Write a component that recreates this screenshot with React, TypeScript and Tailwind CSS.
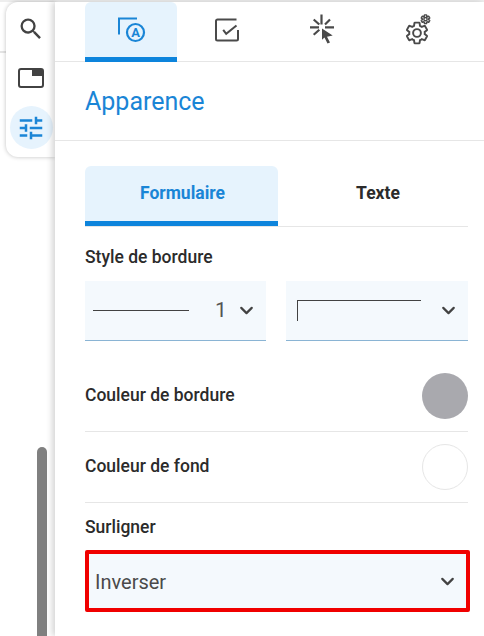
import { ChevronDown } from "lucide-react"

function SearchIcon() {
    return (
        <svg width="28" height="28" viewBox="0 0 24 24" fill="#424242">
            <path d="M15.5 14h-.79l-.28-.27A6.47 6.47 0 0 0 16 9.5 6.5 6.5 0 1 0 9.5 16c1.61 0 3.09-.59 4.23-1.57l.27.28v.79l5 4.99L20.49 19l-4.99-5zm-6 0C7.01 14 5 11.99 5 9.5S7.01 5 9.5 5 14 7.01 14 9.5 11.99 14 9.5 14z" />
        </svg>
    )
}

function PipIcon() {
    return (
        <svg width="28" height="28" viewBox="0 0 28 28" fill="none">
            <rect x="2" y="4" width="24" height="18" rx="2" stroke="#424242" strokeWidth="2" />
            <rect x="15" y="4" width="11" height="7" fill="#424242" />
        </svg>
    )
}

function TuneIcon() {
    return (
        <svg width="30" height="30" viewBox="0 0 24 24" fill="#1a85d6">
            <path d="M3 17v2h6v-2H3zM3 5v2h10V5H3zm10 16v-2h8v-2h-8v-2h-2v6h2zM7 9v2H3v2h4v2h2V9H7zm14 4v-2H11v2h10zm-6-4h2V7h4V5h-4V3h-2v6z" />
        </svg>
    )
}

function AppearanceIcon() {
    return (
        <svg width="30" height="30" viewBox="0 0 30 30" fill="none" stroke="#1a85d6" strokeWidth="2">
            <path d="M3 19.500V3.500h18" />
            <circle cx="19.500" cy="17.500" r="8.500" strokeWidth="2.200" />
            <text x="19.500" y="22" textAnchor="middle" fontSize="13" fontWeight="700" fill="#1a85d6" stroke="none" fontFamily="Roboto, sans-serif">A</text>
        </svg>
    )
}

function CheckBoxIcon() {
    return (
        <svg width="30" height="30" viewBox="0 0 30 30" fill="none" stroke="#4a4a4a" strokeWidth="2">
            <path d="M26 15v9a1.500 1.500 0 0 1-1.500 1.500h-19a1.500 1.500 0 0 1-1.500-1.500v-18a1.500 1.500 0 0 1 1.500-1.500h19" />
            <path d="M11.200 14.800l3 4 10.300-8.300" />
        </svg>
    )
}

function ClickIcon() {
    return (
        <svg width="32" height="32" viewBox="0 0 32 32" fill="none" stroke="#4a4a4a" strokeWidth="2.200">
            <path d="M15.500 .5v10M4 13.300h9M19 13.300h9M7.700 5.500l5.600 5M24 5.500l-5 5M7.700 20.800l5.600-5" />
            <path d="M16 14.500v11.300l2.500-2.300 3 6 2.500-1-3-5.700 5.700-1.300z" fill="#4a4a4a" stroke="none" />
        </svg>
    )
}

const GEAR =
    "M19.14 12.94c.04-.3.06-.61.06-.94 0-.32-.02-.64-.07-.94l2.030-1.580a.49.49 0 0 0 .12-.61l-1.920-3.320a.49.49 0 0 0-.59-.22l-2.390.96c-.5-.38-1.030-.7-1.620-.94l-.36-2.540a.484.484 0 0 0-.48-.41h-3.840c-.24 0-.43.170-.47.41l-.36 2.540c-.59.24-1.130.570-1.620.94l-2.390-.96a.49.49 0 0 0-.59.22L2.740 8.870c-.12.21-.08.47.12.61l2.030 1.580c-.05.3-.09.63-.09.94s.02.64.07.94l-2.030 1.580a.49.49 0 0 0-.12.61l1.920 3.320c.12.22.37.29.59.22l2.390-.96c.5.38 1.030.7 1.620.94l.36 2.540c.05.24.24.41.48.41h3.840c.24 0 .44-.17.47-.41l.36-2.540c.59-.24 1.130-.56 1.620-.94l2.390.96c.22.080.47 0 .59-.22l1.920-3.320c.12-.22.070-.47-.12-.61l-2.010-1.580zM12 15.600A3.610 3.610 0 0 1 8.400 12 3.610 3.610 0 0 1 12 8.400a3.610 3.610 0 0 1 3.600 3.600 3.610 3.610 0 0 1-3.600 3.600z"

function GearsIcon() {
    return (
        <svg width="32" height="32" viewBox="0 0 32 32" fill="none" stroke="#4a4a4a">
            <g transform="translate(2.040 6.040) scale(1.080)" strokeWidth="1.800">
                <path d={GEAR} />
            </g>
            <g transform="translate(18.100 -.2) scale(0.450)" strokeWidth="3.300">
                <path d={GEAR} />
            </g>
        </svg>
    )
}

function Chevron() {
    return <ChevronDown size={21} strokeWidth={2.500} className="shrink-0 text-[#424242]" />
}

function ColorRow({ label, swatch }: { label: string; swatch: string }) {
    return (
        <div className="flex h-[71px] items-center justify-between border-b border-[#e6e6e6]">
            <span className="pb-[1px] text-[17.500px] font-medium text-[#2b2b2b]">{label}</span>
            <div className={`h-[46px] w-[46px] rounded-full ${swatch}`} />
        </div>
    )
}

export default function App() {
    return (
        <div className="relative flex h-[636px] w-[484px] overflow-hidden bg-white font-['Roboto',sans-serif]">
            {/* Page behind the sidebar */}
            <div className="absolute inset-x-0 top-0 h-[2px] bg-[#eeeeee]" />
            <div className="absolute left-0 top-[51px] h-[2px] w-[8px] bg-[#e4e4e4]" />
            <div className="absolute bottom-0 left-[37px] top-[447px] w-[10px] rounded-t-md bg-[#808080]" />

            {/* Left rail */}
            <div className="relative w-[55px] shrink-0 pl-[6px] pt-[2px]">
                <div className="flex h-[155px] flex-col items-center rounded-l-xl bg-white pl-[1px] pt-[13px] shadow-[0_0_4px_rgba(0,0,0,0.25)]">
                    <SearchIcon />
                    <div className="mt-[22px]">
                        <PipIcon />
                    </div>
                    <div className="mt-[13px] flex h-[43px] w-[43px] items-center justify-center rounded-full bg-[#e6f3fd]">
                        <TuneIcon />
                    </div>
                </div>
            </div>

            {/* Panel */}
            <div className="relative mt-[2px] min-w-0 flex-1 bg-white shadow-[-3px_0_6px_rgba(0,0,0,0.16)]">
                <div className="flex h-[60px] gap-[3.500px] border-b border-[#e6e6e6] pl-[30px]">
                    <div className="flex h-[60px] w-[92px] items-center justify-center rounded-t-md border-b-[5px] border-[#0d84dc] bg-[#e6f3fd]">
                        <AppearanceIcon />
                    </div>
                    <div className="flex h-[60px] w-[92px] items-center justify-center pb-[5px]">
                        <CheckBoxIcon />
                    </div>
                    <div className="flex h-[60px] w-[92px] items-center justify-center pb-[5px]">
                        <ClickIcon />
                    </div>
                    <div className="flex h-[60px] w-[92px] items-center justify-center pb-[5px]">
                        <GearsIcon />
                    </div>
                </div>

                <div className="flex h-[79px] items-center border-b border-[#e6e6e6] pl-[30px] pt-[1px]">
                    <h2 className="text-[25px] text-[#1a85d6]">Apparence</h2>
                </div>

                <div className="pl-[30px] pr-[16px] pt-[25px]">
                    {/* Tabs */}
                    <div className="flex h-[61px] border-b border-[#e6e6e6]">
                        <div className="flex h-[60px] w-[193px] items-center justify-center rounded-t-md border-b-[5px] border-[#0d84dc] bg-[#e6f3fd] pl-[2px] text-[17.500px] font-bold text-[#1a85d6]">
                            Formulaire
                        </div>
                        <div className="flex h-[60px] flex-1 items-center justify-center pb-[5px] pl-[10px] text-[17.500px] font-bold text-[#2b2b2b]">
                            Texte
                        </div>
                    </div>

                    <div className="mt-[19px] text-[17.500px] font-medium leading-[22px] text-[#2b2b2b]">Style de bordure</div>

                    <div className="mt-[13px] flex gap-[20px]">
                        <div className="flex h-[60px] w-[181px] items-center border-b border-[#8ab4d4] bg-[#f4f9fd] pl-[8px] pr-[9px]">
                            <div className="h-px w-[96px] bg-[#424242]" />
                            <span className="ml-[26px] text-[21px] text-[#555555]">1</span>
                            <div className="ml-auto">
                                <Chevron />
                            </div>
                        </div>
                        <div className="flex h-[60px] flex-1 items-center justify-between border-b border-[#8ab4d4] bg-[#f4f9fd] pl-[11px] pr-[9px]">
                            <div className="h-[21px] w-[124px] border-l border-t border-[#424242]" />
                            <Chevron />
                        </div>
                    </div>

                    <div className="mt-[20px]">
                        <ColorRow label="Couleur de bordure" swatch="bg-[#a9a9ae]" />
                        <ColorRow label="Couleur de fond" swatch="border border-[#e6e6e6] bg-white" />
                    </div>

                    <div className="mt-[13px] text-[17.500px] font-medium leading-[22px] text-[#2b2b2b]">Surligner</div>

                    {/* Red highlight round the select */}
                    <div className="-mr-[2px] mt-[12px] flex h-[62px] items-center justify-between rounded-[2px] border-[4px] border-[#f00000] bg-[#f4f9fd] pl-[6px] pr-[8px]">
                        <span className="pt-[2px] text-[20px] text-[#4a4a4a]">Inverser</span>
                        <Chevron />
                    </div>
                </div>
            </div>
        </div>
    )
}
